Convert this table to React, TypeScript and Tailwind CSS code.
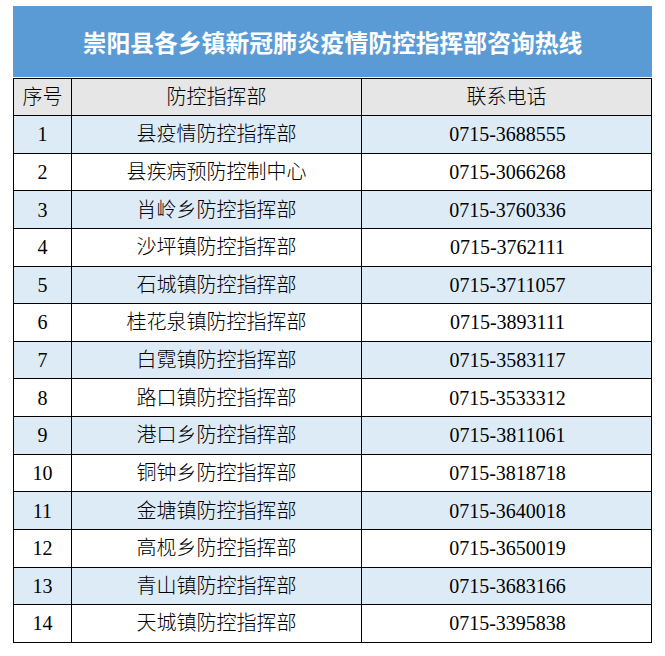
const rows: [string, string, string][] = [
  ['1', '县疫情防控指挥部', '0715-3688555'],
  ['2', '县疾病预防控制中心', '0715-3066268'],
  ['3', '肖岭乡防控指挥部', '0715-3760336'],
  ['4', '沙坪镇防控指挥部', '0715-3762111'],
  ['5', '石城镇防控指挥部', '0715-3711057'],
  ['6', '桂花泉镇防控指挥部', '0715-3893111'],
  ['7', '白霓镇防控指挥部', '0715-3583117'],
  ['8', '路口镇防控指挥部', '0715-3533312'],
  ['9', '港口乡防控指挥部', '0715-3811061'],
  ['10', '铜钟乡防控指挥部', '0715-3818718'],
  ['11', '金塘镇防控指挥部', '0715-3640018'],
  ['12', '高枧乡防控指挥部', '0715-3650019'],
  ['13', '青山镇防控指挥部', '0715-3683166'],
  ['14', '天城镇防控指挥部', '0715-3395838'],
];

const cell = 'flex items-center justify-center border-r border-black';

export default function App() {
  return (
    <div className="w-[665px] h-[656px] bg-white pt-[6px] pl-[13px] font-['Liberation_Serif','Noto_Sans_CJK_SC',serif] text-black">
      <div className="w-[639px] h-[71px] mb-px bg-[#5b9bd5] flex items-center justify-center">
        <h1 className="text-white text-[23.8px] font-bold font-['Noto_Sans_CJK_SC',sans-serif] leading-none">
          崇阳县各乡镇新冠肺炎疫情防控指挥部咨询热线
        </h1>
      </div>

      <div className="w-[639px] border-l border-t border-black text-[20px] font-light leading-none">
        <div className="flex h-[37px] border-b border-black bg-[#e7e6e6]">
          <div className={`${cell} w-[58px]`}>序号</div>
          <div className={`${cell} w-[290px]`}>防控指挥部</div>
          <div className={`${cell} w-[290px]`}>联系电话</div>
        </div>
        {rows.map(([no, name, tel], i) => (
          <div
            key={no}
            className={`flex h-[37.64px] border-b border-black ${i % 2 === 0 ? 'bg-[#ddebf7]' : 'bg-white'}`}
          >
            <div className={`${cell} w-[58px]`}>{no}</div>
            <div className={`${cell} w-[290px]`}>{name}</div>
            <div className={`${cell} w-[290px] pl-[2px]`}>{tel}</div>
          </div>
        ))}
      </div>
    </div>
  );
}
